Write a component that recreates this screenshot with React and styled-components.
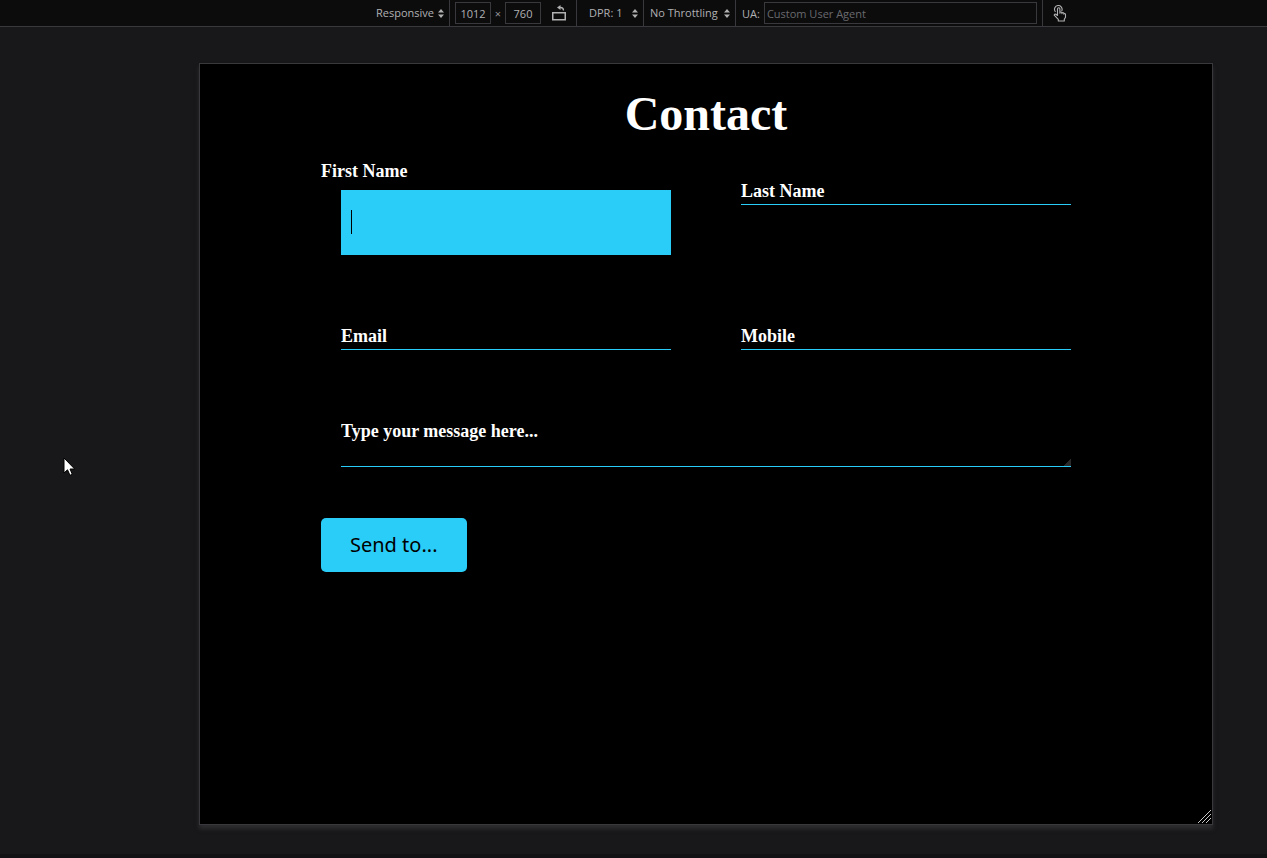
import React from "react";
import styled, { createGlobalStyle } from "styled-components";

const GlobalStyle = createGlobalStyle`
  * { box-sizing: border-box; }
  body {
    margin: 0;
    background: #18181a;
    font-family: "Open Sans", sans-serif;
  }
`;

const Screen = styled.div`
  position: relative;
  min-height: 100vh;
  border-bottom: 4px solid #121214;
`;

const Toolbar = styled.header`
  display: flex;
  align-items: stretch;
  height: 27px;
  padding-left: 374px;
  background: #0c0c0d;
  border-bottom: 1px solid #38383d;
  color: #b1b1b3;
  font-size: 11px;
`;

const Group = styled.div`
  display: flex;
  align-items: center;
  flex: none;
  gap: ${(p) => p.$gap || 0}px;
  width: ${(p) => p.$width}px;
  padding: 0 5px 0 ${(p) => p.$indent || 5}px;
  border-right: ${(p) => (p.$last ? "none" : "1px solid #38383d")};
`;

const Picker = styled.select`
  appearance: none;
  flex: 1;
  min-width: 0;
  height: 20px;
  padding: 0;
  border: 0;
  background: transparent;
  color: inherit;
  font: 11px/18px "Open Sans", sans-serif;
`;

const Size = styled.input`
  width: 36px;
  height: 22px;
  padding: 0;
  border: 1px solid #38383d;
  background: transparent;
  color: inherit;
  font: 11px/18px "Open Sans", sans-serif;
  text-align: center;
`;

const Times = styled.span`
  width: 14px;
  text-align: center;
  color: #939395;
`;

const IconButton = styled.button`
  display: flex;
  margin-left: ${(p) => p.$space || 0}px;
  padding: 0;
  border: 0;
  background: transparent;
  color: #b1b1b3;
`;

const AgentInput = styled.input`
  flex: 1;
  min-width: 0;
  height: 22px;
  padding: 0 2px;
  border: 1px solid #38383d;
  background: transparent;
  color: inherit;
  font: 11px/18px "Open Sans", sans-serif;
  &::placeholder { color: #6a6a6d; opacity: 1; }
`;

const Stage = styled.main`
  padding: 36px 54px 28px 199px;
`;

const Viewport = styled.section`
  position: relative;
  min-height: 762px;
  padding: 22px 20px;
  background: #000;
  border: 1px solid #38383d;
  box-shadow: 0 4px 4px rgba(66, 66, 70, 0.5);
  color: #fff;
  font-family: "Liberation Serif", "Times New Roman", serif;
`;

const Title = styled.h1`
  margin: 0 0 19px;
  font-size: 48px;
  line-height: 56px;
  text-align: center;
`;

const Form = styled.form`
  max-width: 770px;
  margin: 0 auto;
  padding-right: 20px;
`;

const Fields = styled.div`
  display: grid;
  grid-template-columns: 1fr 1fr;
  grid-template-rows: 145px 95px auto;
  column-gap: 50px;
`;

const Field = styled.div`
  display: grid;
  align-content: start;
  padding: ${(p) => (p.$active ? "0" : "20px 0 0 20px")};
  grid-column: ${(p) => (p.$wide ? "1 / -1" : "auto")};
`;

const Label = styled.label`
  grid-area: 1 / 1;
  z-index: 1;
  padding-bottom: ${(p) => (p.$active ? 9 : 0)}px;
  font-size: 18px;
  font-weight: bold;
  line-height: 20px;
  pointer-events: none;
`;

const Underlined = styled.input`
  grid-area: 1 / 1;
  width: 100%;
  height: 24px;
  padding: 0;
  border: 0;
  border-bottom: 1px solid #2acdf7;
  background: transparent;
  color: #fff;
  font: bold 18px/20px "Liberation Serif", serif;
`;

const Filled = styled.div`
  display: flex;
  height: 65px;
  margin-left: 20px;
  padding: 20px 10px;
  background: #2acdf7;
`;

const Caret = styled.span`
  width: 1px;
  height: 24px;
  background: #000;
`;

const ActiveInput = styled.input`
  flex: 1;
  min-width: 0;
  height: 24px;
  padding: 0;
  border: 0;
  outline: 0;
  background: transparent;
  font: 20px "Open Sans", sans-serif;
`;

const Message = styled.textarea`
  display: block;
  width: 100%;
  height: 46px;
  padding: 0;
  border: 0;
  border-bottom: 1px solid #2acdf7;
  background: transparent;
  color: #fff;
  overflow: hidden;
  resize: vertical;
  font: bold 18px/20px "Liberation Serif", serif;
  &::placeholder { color: #fff; opacity: 1; }
  &::-webkit-resizer {
    background: linear-gradient(135deg, transparent 75%, #2a2a2a 75%);
  }
`;

const Send = styled.button`
  display: block;
  height: 54px;
  margin-top: 51px;
  padding: 0 29px;
  border: 0;
  border-radius: 5px;
  background: #2acdf7;
  color: #000;
  font: 20px/28px "Noto Sans", sans-serif;
`;

const Grip = styled.svg`
  position: absolute;
  right: 1px;
  bottom: 1px;
`;

const Pointer = styled.svg`
  position: absolute;
  left: 63px;
  top: 457px;
`;

function Arrows() {
  return (
    <svg width="6" height="9" viewBox="0 0 6 9" fill="#b1b1b3" aria-hidden="true">
      <path d="M3 0 6 3.5H0ZM0 5.5H6L3 9Z" />
    </svg>
  );
}

function Choice({ name, value }) {
  return (
    <>
      <Picker aria-label={name} defaultValue={value}>
        <option>{value}</option>
      </Picker>
      <Arrows />
    </>
  );
}

function RotateIcon() {
  return (
    <svg width="14" height="16" viewBox="0 0 14 16" fill="none" stroke="currentColor" aria-hidden="true">
      <rect x="0.75" y="7.75" width="12.5" height="7" strokeWidth="1.5" />
      <path d="M7 2.5H8.5Q11.5 2.5 11.5 5.5" strokeWidth="1.3" />
      <path d="M8.5 0 5 2.5 8.5 5Z" fill="currentColor" stroke="none" />
    </svg>
  );
}

function TouchIcon() {
  return (
    <svg width="14" height="17" viewBox="0 0 14 17" fill="none" stroke="currentColor" strokeWidth="1.1" strokeLinejoin="round" strokeLinecap="round" aria-hidden="true">
      <path d="M2.2 6.5A3.8 3.8 0 1 1 8.8 5.8" />
      <path d="M4.5 10.5V4a1.2 1.2 0 0 1 2.4 0v4.3V7.4q1.1-.9 2 .2v1V8q1.1-.8 2 .2v1V8.6q1.6-.4 1.6 1v2.6l-1.2 2V16H5.3v-1.6L1.2 10.2q.2-1.6 1.7-.9Z" />
    </svg>
  );
}

function TextField({ id, label }) {
  return (
    <Field>
      <Label htmlFor={id}>{label}</Label>
      <Underlined id={id} type="text" />
    </Field>
  );
}

export default function App() {
  return (
    <Screen>
      <GlobalStyle />
      <Toolbar>
        <Group $width={76} $indent={2}>
          <Choice name="Device" value="Responsive" />
        </Group>
        <Group $width={127}>
          <Size aria-label="Width" defaultValue="1012" />
          <Times>×</Times>
          <Size aria-label="Height" defaultValue="760" />
          <IconButton type="button" aria-label="Rotate viewport" $space={11}>
            <RotateIcon />
          </IconButton>
        </Group>
        <Group $width={67} $indent={12}>
          <Choice name="Device pixel ratio" value="DPR: 1" />
        </Group>
        <Group $width={92} $indent={6}>
          <Choice name="Throttling" value="No Throttling" />
        </Group>
        <Group $width={307} $indent={6} $gap={4}>
          <label htmlFor="agent">UA:</label>
          <AgentInput id="agent" placeholder="Custom User Agent" />
        </Group>
        <Group $width={40} $indent={10} $last>
          <IconButton type="button" aria-label="Touch simulation">
            <TouchIcon />
          </IconButton>
        </Group>
      </Toolbar>
      <Stage>
        <Viewport>
          <Title>Contact</Title>
          <Form>
            <Fields>
              <Field $active>
                <Label htmlFor="first" $active>First Name</Label>
                <Filled>
                  <Caret />
                  <ActiveInput id="first" type="text" />
                </Filled>
              </Field>
              <TextField id="last" label="Last Name" />
              <TextField id="email" label="Email" />
              <TextField id="mobile" label="Mobile" />
              <Field $wide>
                <Message aria-label="Message" placeholder="Type your message here..." />
              </Field>
            </Fields>
            <Send type="button">Send to...</Send>
          </Form>
          <Grip width="13" height="13" viewBox="0 0 13 13" stroke="#c8c8c8" aria-hidden="true">
            <path d="M0 13 13 0M4 13 13 4M8 13 13 8" />
          </Grip>
        </Viewport>
      </Stage>
      <Pointer width="13" height="20" viewBox="0 0 13 20" aria-hidden="true">
        <path d="M1 1V16L4.5 12.8 7 18.3 9.3 17.3 7 12H11.7Z" fill="#fff" stroke="#000" />
      </Pointer>
    </Screen>
  );
}
